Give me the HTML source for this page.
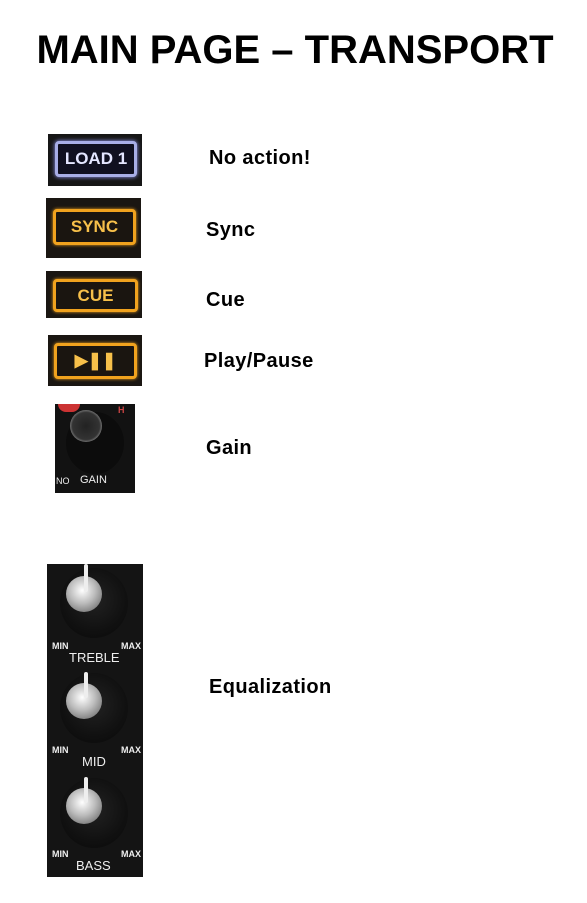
<!DOCTYPE html>
<html><head><style>
body{margin:0;width:587px;height:903px;background:#fff;position:relative;overflow:hidden;font-family:"Liberation Sans",sans-serif}
.t{position:absolute;left:0;width:590px;top:28px;text-align:center;font-weight:bold;font-size:40px;color:#000}
.l{position:absolute;font-weight:bold;font-size:20px;letter-spacing:0.4px;color:#000;line-height:20px}
.b{position:absolute;background:#111}
.btn{position:absolute;border-radius:4px;display:flex;align-items:center;justify-content:center;font-weight:bold;font-size:17px}
.o{border:3px solid #f0a21e;background:#1a1510;color:#f7c04a;box-shadow:0 0 3px #f0a21e}
.knob{position:absolute;border-radius:50%;background:radial-gradient(circle at 50% 45%,#222 0,#111 60%,#080808 100%)}
.cap{position:absolute;border-radius:50%;background:radial-gradient(circle at 45% 40%,#fff 0,#bbb 45%,#555 100%)}
.ind{position:absolute;width:4px;background:#eee;border-radius:2px}
.s{position:absolute;color:#eee;font-weight:bold;font-size:9px}
.m{position:absolute;color:#eee;font-size:13px}
</style></head><body>
<div class="t">MAIN PAGE – TRANSPORT</div>

<div class="b" style="left:48px;top:134px;width:94px;height:52px;background:#161616"></div>
<div class="btn" style="left:55px;top:141px;width:76px;height:30px;border:3px solid #a8aee6;background:#101020;color:#e4e6ff;box-shadow:0 0 4px #9aa0ff">LOAD 1</div>
<div class="l" style="left:209px;top:148px">No action!</div>

<div class="b" style="left:46px;top:198px;width:95px;height:60px;background:#1a1612"></div>
<div class="btn o" style="left:53px;top:209px;width:77px;height:30px">SYNC</div>
<div class="l" style="left:206px;top:220px">Sync</div>

<div class="b" style="left:46px;top:271px;width:96px;height:47px;background:#1a1612"></div>
<div class="btn o" style="left:53px;top:279px;width:79px;height:27px">CUE</div>
<div class="l" style="left:206px;top:290px">Cue</div>

<div class="b" style="left:48px;top:335px;width:94px;height:51px;background:#1a1612"></div>
<div class="btn o" style="left:54px;top:343px;width:77px;height:30px">▶❚❚</div>
<div class="l" style="left:204px;top:351px">Play/Pause</div>

<div class="b" style="left:55px;top:404px;width:80px;height:89px;background:#121212"></div>
<div style="position:absolute;left:58px;top:404px;width:22px;height:8px;background:#c33;border-radius:0 0 10px 10px"></div>
<div class="knob" style="left:66px;top:412px;width:58px;height:62px;background:#0c0c0c"></div>
<div class="cap" style="left:70px;top:410px;width:32px;height:32px;background:radial-gradient(circle,#222 0,#333 60%,#888 75%,#222 100%)"></div>
<div class="s" style="left:56px;top:476px;font-weight:normal">NO</div>
<div class="m" style="left:80px;top:474px;font-size:11px">GAIN</div>
<div class="s" style="left:118px;top:405px;color:#c44">H</div>
<div class="l" style="left:206px;top:438px">Gain</div>

<div class="b" style="left:47px;top:564px;width:96px;height:313px;background:#141414"></div>
<div class="knob" style="left:60px;top:568px;width:68px;height:70px"></div>
<div class="cap" style="left:66px;top:576px;width:36px;height:36px"></div>
<div class="ind" style="left:84px;top:564px;height:28px"></div>
<div class="s" style="left:52px;top:641px">MIN</div><div class="s" style="left:121px;top:641px">MAX</div>
<div class="m" style="left:69px;top:650px">TREBLE</div>
<div class="knob" style="left:60px;top:673px;width:68px;height:70px"></div>
<div class="cap" style="left:66px;top:683px;width:36px;height:36px"></div>
<div class="ind" style="left:84px;top:672px;height:26px"></div>
<div class="s" style="left:52px;top:745px">MIN</div><div class="s" style="left:121px;top:745px">MAX</div>
<div class="m" style="left:82px;top:754px">MID</div>
<div class="knob" style="left:60px;top:778px;width:68px;height:70px"></div>
<div class="cap" style="left:66px;top:788px;width:36px;height:36px"></div>
<div class="ind" style="left:84px;top:777px;height:26px"></div>
<div class="s" style="left:52px;top:849px">MIN</div><div class="s" style="left:121px;top:849px">MAX</div>
<div class="m" style="left:76px;top:858px">BASS</div>
<div class="l" style="left:209px;top:677px">Equalization</div>
</body></html>
